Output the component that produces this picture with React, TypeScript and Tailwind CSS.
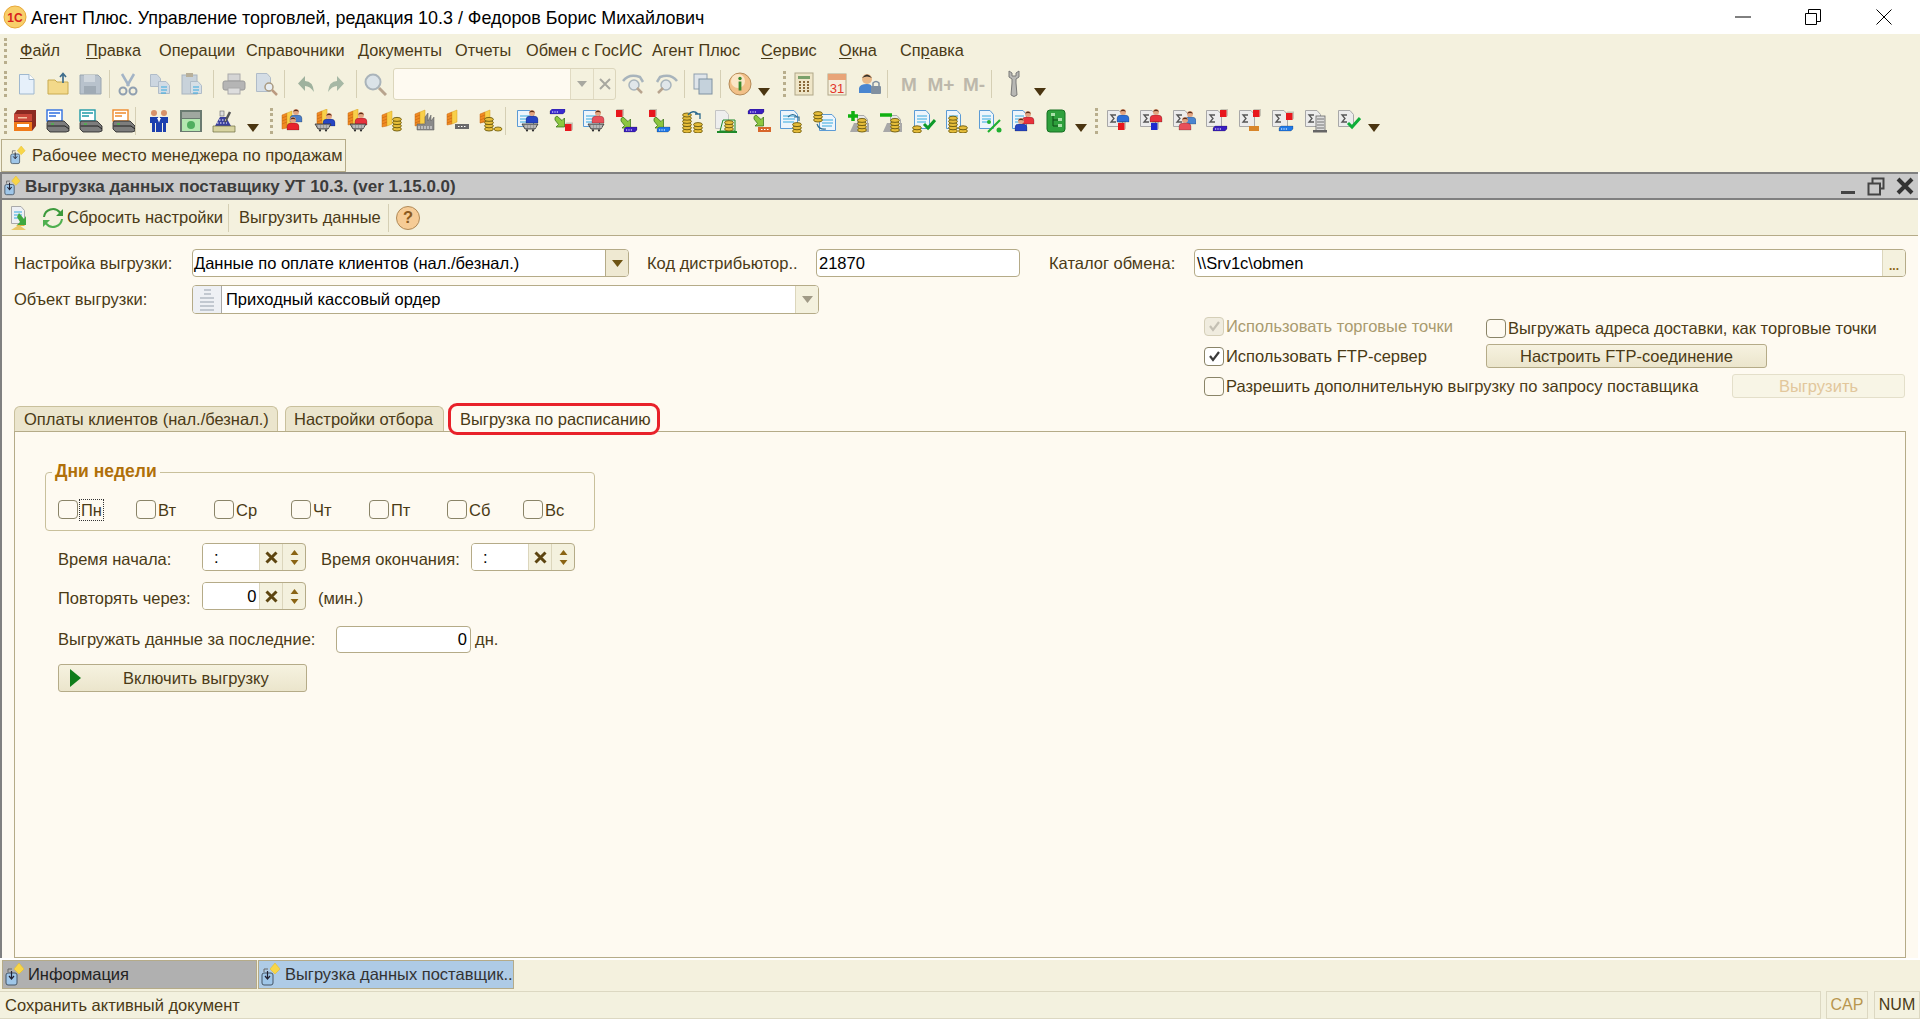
import React from "react";

type XY = { x?: number; y?: number };
const Svg = ({ children, w = 24, h = 24, vb = "0 0 24 24", c = "" }: { children: React.ReactNode; w?: number; h?: number; vb?: string; c?: string }) => (
  <svg width={w} height={h} viewBox={vb} className={c + " shrink-0 block"}>{children}</svg>
);
const Pg = ({ x = 0, y = 0, w = 14, h = 18, f = "#eef5fb", s = "#5b9bd5", l = true }: XY & { w?: number; h?: number; f?: string; s?: string; l?: boolean }) => (
  <g transform={`translate(${x} ${y})`}>
    <path d={`M.5 .5H${w - 4}L${w - .5} 4.5V${h - .5}H.5Z`} fill={f} stroke={s} />
    {l && <path d={`M3 6H${w - 3}M3 9H${w - 3}M3 12H${w - 4}`} stroke="#35a9e0" strokeWidth="1.2" />}
  </g>
);
const Coins = ({ x = 0, y = 0, n = 3 }: XY & { n?: number }) => (
  <g>{Array.from({ length: n }).map((_, i) => (
    <ellipse key={i} cx={x} cy={y - i * 3.2} rx="4.4" ry="2" fill="#e6bd3a" stroke="#6b5a10" strokeWidth=".9" />
  ))}</g>
);
const Person = ({ x = 0, y = 0, c = "#2b4fc7" }: XY & { c?: string }) => (
  <g transform={`translate(${x} ${y})`}>
    <path d="M-6 12V8.5Q-6 5 -2 5H2Q6 5 6 8.5V12Z" fill={c} stroke="#00000055" strokeWidth=".6" />
    <circle cx="0" cy="2" r="3" fill="#e3a582" />
    <path d="M-3 1.6Q0 -2.6 3 1.6Q0 .2 -3 1.6Z" fill="#5a2c18" />
  </g>
);
const Bars = ({ x = 0, y = 0, h = 15 }: XY & { h?: number }) => (
  <g transform={`translate(${x} ${y})`}>
    <path d={`M0 4L5 2V${h}L0 ${h + 1}Z`} fill="#f08a22" stroke="#c96a12" strokeWidth=".5" />
    <path d={`M5 2L10 0V${h - 2}L5 ${h}Z`} fill="#f8cf4a" stroke="#d8a01e" strokeWidth=".5" />
    <path d={`M0 7L5 5M0 10L5 8M0 13L5 11`} stroke="#b85c10" strokeWidth=".5" />
  </g>
);
const Cart = ({ x = 0, y = 0 }: XY) => (
  <g transform={`translate(${x} ${y})`}>
    <path d="M0 0H16L13 5H3Z" fill="#9a9a9a" stroke="#333" strokeWidth=".8" />
    <path d="M4 1V4M7 1V4M10 1V4M13 1V4" stroke="#eee" strokeWidth=".7" />
    <circle cx="5" cy="6.4" r="1.1" fill="#333" /><circle cx="11" cy="6.4" r="1.1" fill="#333" />
  </g>
);
const Arr = ({ x = 0, y = 0 }: XY) => (
  <path transform={`translate(${x} ${y})`} d="M0 1.5L2 0L7 4.5L9.5 2V11H1L3.5 8.5L0 4Z" fill="#8cc63f" stroke="#2e6b12" strokeWidth=".7" />
);
const Box = ({ x = 0, y = 0, c = "#3a2ad0", w = 13 }: XY & { c?: string; w?: number }) => (
  <g transform={`translate(${x} ${y})`}>
    <path d={`M0 2L2 0H${w}V3L${w - 2} 5H0Z`} fill={c} stroke="#00000066" strokeWidth=".5" />
    <path d="M2 3H3.2M4.4 3H5.6M6.8 3H8" stroke="#fff" strokeWidth="1.1" />
  </g>
);
const Red = ({ x = 0, y = 0, c = "#e8171d" }: XY & { c?: string }) => (
  <g transform={`translate(${x} ${y})`}>
    <rect width="6.5" height="7" fill={c} /><path d="M0 0L1.5 -1.4H8V5.5L6.5 7V0Z" fill="#00000030" />
  </g>
);
const Sig = ({ children }: { children?: React.ReactNode }) => (
  <Svg>
    <Pg x={1} y={1} w={16} h={17} f="#ececec" s="#a8a8a8" l={false} />
    <path d="M10 6H5L8 9.5L5 13H10" fill="none" stroke="#555" strokeWidth="1.3" />
    {children}
  </Svg>
);
const Printer = ({ c }: { c: string }) => (
  <Svg>
    <rect x="1" y="1" width="15" height="11" fill="#fff" stroke={c} strokeWidth="1.4" />
    <path d="M3 4H14M3 7H10" stroke={c} strokeWidth="1.4" />
    <path d="M2 12H18L23 17V22L20 23H4L1 20V14Z" fill="#7d7d7d" stroke="#222" strokeWidth=".8" />
    <path d="M1.500 17H19L23 20" stroke="#222" fill="none" />
    <path d="M5 15H8" stroke="#3ec43e" strokeWidth="1.200" />
  </Svg>
);
const Grip = () => <div className="h-[26px] w-[3px] shrink-0 border-l-[3px] border-dotted border-[#b8ae8c]" />;
const Sep = ({ c }: { c: string }) => <div className={c + " h-[28px] w-px shrink-0 bg-[#d5cfb4]"} />;
const Drop = ({ c = "" }: { c?: string }) => (
  <Svg w={12} h={8} vb="0 0 12 8" c={c + " mt-[15px]"}><path d="M0 0H12L6 8Z" fill="#4a3510" /></Svg>
);
const Slot = ({ c = "w-[32px]", children }: { c?: string; children: React.ReactNode }) => (
  <div className={c + " flex shrink-0 items-center justify-center"}>{children}</div>
);
const DocStar = ({ s = 16 }: { s?: number }) => (
  <Svg w={s} h={s * 1.15} vb="0 0 20 23">
    <path d="M7 6H3V9" fill="none" stroke="#666" strokeWidth="1" />
    <rect x="1" y="10" width="11" height="12" rx="2" fill="#9fc6e8" stroke="#456" strokeWidth="1" />
    <path d="M6.500 8V15M4 13L6.500 16L9 13" fill="none" stroke="#223" strokeWidth="1.200" />
    <path d="M14 0L19 6L14 11L9 6Z" fill="#f8d648" stroke="#e4b820" strokeWidth=".5" />
  </Svg>
);

const Row1 = () => (
  <div className="flex h-[34px] items-center pl-[4px]">
    <Grip />
    <div className="w-[3px] shrink-0" />
    <Slot><Svg><path d="M5.500 2.500H15L20 7.500V22H5.500Z" fill="#e6f0fa" stroke="#9fb8cf" /><path d="M15 2.500V7.500H20" fill="#fff" stroke="#9fb8cf" /></Svg></Slot>
    <Slot><Svg><path d="M2 8H9L11 10H22V22H2Z" fill="#f3d98a" stroke="#c8aa50" /><path d="M17 2V11M14 5L17 1.500L20 5" fill="none" stroke="#3f6d8c" strokeWidth="1.700" /></Svg></Slot>
    <Slot><Svg><path d="M2 3H20L23 6V22H2Z" fill="#b8c2cc" stroke="#9aa6b0" /><rect x="6" y="3" width="11" height="7" fill="#d0d7dd" /><rect x="6" y="14" width="12" height="8" fill="#a0abb5" /></Svg></Slot>
    <Sep c="ml-[3px] mr-[2px]" />
    <Slot><Svg><path d="M6 2L13 14M18 2L11 14" stroke="#a3b4c6" strokeWidth="2.500" /><circle cx="7" cy="19" r="3.500" fill="none" stroke="#8f9fb0" strokeWidth="2" /><circle cx="17" cy="19" r="3.500" fill="none" stroke="#8f9fb0" strokeWidth="2" /></Svg></Slot>
    <Slot><Svg><Pg x={2} y={2} w={11} h={13} f="#ccd6e0" s="#b0bcc8" l={false} /><Pg x={10} y={9} w={12} h={13} f="#d2dce5" s="#b0bcc8" /></Svg></Slot>
    <Slot><Svg><rect x="2" y="3" width="15" height="19" fill="#c8d2da" stroke="#a8b4be" /><rect x="6" y="1" width="7" height="4" fill="#b8b09a" /><Pg x={10} y={9} w={12} h={13} f="#d6dfe6" s="#b0bcc8" /></Svg></Slot>
    <Sep c="ml-[5px] mr-[4px]" />
    <Slot><Svg><rect x="6" y="2" width="12" height="7" fill="#d5d5d5" stroke="#aaa" /><rect x="1" y="9" width="22" height="9" rx="2" fill="#b5b5b5" stroke="#999" /><rect x="6" y="16" width="12" height="6" fill="#ddd" stroke="#aaa" /></Svg></Slot>
    <Slot><Svg><Pg x={2} y={1} w={15} h={19} f="#d4dde5" s="#b0bcc8" l={false} /><circle cx="15" cy="15" r="4" fill="#e8eef2" stroke="#aa9a80" strokeWidth="1.500" /><path d="M18 18L23 23" stroke="#bb9a80" strokeWidth="2.500" /></Svg></Slot>
    <Sep c="ml-[2px] mr-[6px]" />
    <Slot c="w-[30px]"><Svg w={18} h={20} vb="0 0 18 20"><path d="M8 2V7Q16 7 17 18Q13 12 8 12V17L1 9.500Z" fill="#9fb29e" /></Svg></Slot>
    <Slot c="w-[30px]"><Svg w={18} h={20} vb="0 0 18 20"><path d="M10 2V7Q2 7 1 18Q5 12 10 12V17L17 9.500Z" fill="#a6b8a5" /></Svg></Slot>
    <Sep c="ml-[5px] mr-[2px]" />
    <Slot><Svg><circle cx="10" cy="10" r="7.500" fill="#dbe3e8" stroke="#aab4ba" strokeWidth="2" /><path d="M16 16L23 23" stroke="#b8a48e" strokeWidth="3" /></Svg></Slot>
    <div className="ml-[2px] flex h-[32px] w-[223px] shrink-0 items-stretch rounded-[3px] border border-[#dcd6bc] bg-[#f4f1de]">
      <div className="w-[176px] rounded-l-[3px] bg-[#fefaf1]" />
      <div className="flex w-[23px] items-center justify-center border-l border-[#e0dac2]"><Svg w={10} h={6} vb="0 0 10 6"><path d="M0 0H10L5 6Z" fill="#a8a8a0" /></Svg></div>
      <div className="flex w-[22px] items-center justify-center border-l border-[#e0dac2]"><Svg w={12} h={12} vb="0 0 12 12"><path d="M1 1L11 11M11 1L1 11" stroke="#a8a8a0" strokeWidth="2" /></Svg></div>
    </div>
    <Slot c="w-[34px] ml-[0px]"><Svg><path d="M2 9Q8 1 19 5L22 10" fill="none" stroke="#a8b4bc" strokeWidth="2.500" /><circle cx="13" cy="13" r="5" fill="#e0e6ea" stroke="#a8b4bc" strokeWidth="1.500" /><path d="M16 16L21 21" stroke="#b8a48e" strokeWidth="2.500" /></Svg></Slot>
    <Slot c="w-[33px]"><Svg><path d="M22 9Q16 1 5 5L2 10" fill="none" stroke="#a8b4bc" strokeWidth="2.500" /><circle cx="11" cy="13" r="5" fill="#e0e6ea" stroke="#a8b4bc" strokeWidth="1.500" /><path d="M8 16L3 21" stroke="#b8a48e" strokeWidth="2.500" /></Svg></Slot>
    <Sep c="ml-[1px] mr-[4px]" />
    <Slot c="w-[28px]"><Svg><rect x="3" y="2" width="13" height="15" fill="#dfe5ea" stroke="#8fa0ae" /><rect x="8" y="7" width="13" height="15" fill="#c5d2dc" stroke="#7f92a2" /></Svg></Slot>
    <Sep c="ml-[3px] mr-[4px]" />
    <Slot c="w-[30px]"><Svg><circle cx="12" cy="12" r="11" fill="#f2c088" stroke="#b48a58" /><circle cx="10" cy="9" r="7" fill="#fbe6c6" /><circle cx="12" cy="6.500" r="1.700" fill="#3a8a2c" /><rect x="10.600" y="9.500" width="2.800" height="9" fill="#3a8a2c" /></Svg></Slot>
    <Drop c="ml-[3px]" />
    <div className="ml-[13px]"><Grip /></div>
    <Slot c="w-[32px] ml-[2px]"><Svg><rect x="3" y="1" width="18" height="22" fill="#efe6c8" stroke="#b0a888" /><rect x="6" y="4" width="12" height="3" fill="#7aa06a" /><path d="M7 10H9M11 10H13M15 10H17M7 13H9M11 13H13M15 13H17M7 16H9M11 16H13M15 16H17M7 19H9M11 19H13M15 19H17" stroke="#8a6a3a" strokeWidth="2" /></Svg></Slot>
    <Slot c="w-[33px]"><Svg><rect x="3" y="2" width="18" height="21" fill="#f6efdc" stroke="#b0a888" /><rect x="3" y="2" width="18" height="6" fill="#e8a478" /><text x="12" y="21" fontSize="13" fill="#e2352a" textAnchor="middle" fontFamily="Liberation Sans">31</text></Svg></Slot>
    <Slot c="w-[33px]"><Svg><circle cx="9" cy="7" r="5" fill="#e8b888" /><path d="M4 6Q9 -1 14 6Q9 3 4 6Z" fill="#33302a" /><path d="M1 21V16Q2 12 9 12Q14 12 14 16V21Z" fill="#4a86d0" /><rect x="13" y="14" width="10" height="8" rx="1" fill="#8090a0" /><path d="M15 14V11Q18 8 21 11V14" fill="none" stroke="#8090a0" strokeWidth="1.500" /></Svg></Slot>
    <Sep c="ml-[1px] mr-[6px]" />
    <div className="flex w-[100px] shrink-0 items-center font-bold text-[19px] leading-none text-[#bdb8ab]">
      <span className="w-[30px] text-center">M</span><span className="w-[34px] text-center">M+</span><span className="w-[32px] text-center">M-</span>
    </div>
    <Sep c="ml-[-3px] mr-[14px]" />
    <Svg w={16} h={28} vb="0 0 16 28"><path d="M3 1V7L6 9V13L5 25Q8 28 11 25L10 13V9L13 7V1L10 3V6H6V3Z" fill="#b8b8b4" stroke="#7a7a78" /></Svg>
    <Drop c="ml-[12px]" />
  </div>
);

const Sp = ({ children }: { children: React.ReactNode }) => <Slot c="w-[33px]">{children}</Slot>;
const Row2 = () => (
  <div className="mt-[2px] flex h-[35px] items-center pl-[4px]">
    <Grip />
    <div className="w-[1px] shrink-0" />
    <Sp><Svg><path d="M4 1H23V17L19 22H1V5Z" fill="#8b2a22" /><rect x="1" y="5" width="18" height="7" fill="#c9483a" /><rect x="1" y="13" width="18" height="9" fill="#f07a1a" /><rect x="5" y="8" width="9" height="1.500" fill="#f4c0a0" /><rect x="4" y="15" width="12" height="3" fill="#fff" /></Svg></Sp>
    <Sp><Printer c="#2f6fe0" /></Sp>
    <Sp><Printer c="#1f9aa8" /></Sp>
    <Sp><Printer c="#ee8a2c" /></Sp>
    <Sep c="ml-[-5px] mr-[7px]" />
    <Slot c="w-[31px]"><Svg><circle cx="7" cy="4" r="3" fill="#d8926a" /><circle cx="17" cy="4" r="3" fill="#d8926a" /><path d="M3 8H11L12 14V23H9V14H8V23H5V14L3 14Z" fill="#1c3fae" /><path d="M13 8H21L21 14H19V23H16V14H15V23H12V14Z" fill="#1c3fae" /><path d="M10 9L12 13L14 9Z" fill="#fff" /></Svg></Slot>
    <Sp><Svg><rect x="1" y="1" width="22" height="22" fill="#6a7a70" /><rect x="3" y="3" width="18" height="6" fill="#a0a8a0" /><rect x="3" y="10" width="18" height="12" fill="#b4e8b0" /><circle cx="12" cy="16" r="4" fill="#4fae5f" /></Svg></Sp>
    <Sp><Svg><path d="M3 17L8 8H14L19 17Z" fill="#3a3f9e" /><path d="M1 17H23V23H1Z" fill="#d8d4a0" stroke="#6a6a40" strokeWidth=".7" /><path d="M18 3L13 13" stroke="#555" strokeWidth="2.500" /><rect x="8" y="2" width="4" height="5" fill="#ddd" stroke="#666" strokeWidth=".6" /><path d="M5 14H15M7 11H14" stroke="#fff" strokeDasharray="1.500 1.500" /></Svg></Sp>
    <Drop c="ml-[7px]" />
    <div className="ml-[11px]"><Grip /></div>
    <div className="w-[3px] shrink-0" />
    <Sp><Svg><Bars x={1} y={2} h={17} /><Person x={15} y={1} c="#4a7dc8" /><Person x={12} y={9} c="#e8232c" /></Svg></Sp>
    <Sp><Svg><Bars x={3} y={0} /><Person x={15} y={5} c="#2645c4" /><Cart x={1} y={15} /></Svg></Sp>
    <Sp><Svg><Bars x={1} y={0} /><Person x={14} y={4} c="#e8323c" /><Cart x={3} y={15} /></Svg></Sp>
    <Sp><Svg><Bars x={2} y={2} /><Coins x={17} y={20} n={4} /></Svg></Sp>
    <Sp><Svg><Bars x={2} y={1} /><path d="M12 8L15 4V12L18 6V12L21 8V21H4V15H12Z" fill="#8a8a8a" stroke="#555" strokeWidth=".5" /><path d="M6 17V20M9 17V20M12 17V20M15 17V20M18 17V20" stroke="#eee" /></Svg></Sp>
    <Sp><Svg><Bars x={1} y={1} h={14} /><rect x="9" y="15" width="14" height="5" fill="#6a6a6a" /><path d="M12 17.500H13.500M15 17.500H16.500M18 17.500H19.500" stroke="#fff" /></Svg></Sp>
    <Sp><Svg><Bars x={1} y={1} h={12} /><Coins x={10} y={20} n={4} /><ellipse cx="19" cy="20" rx="4" ry="2" fill="#e6bd3a" stroke="#6b5a10" strokeWidth=".8" /></Svg></Sp>
    <Sep c="ml-[-2px] mr-[5px]" />
    <Sp><Svg><Pg x={1} y={1} w={17} h={17} /><Person x={16} y={2} c="#2645c4" /><Cart x={6} y={15} /></Svg></Sp>
    <Sp><Svg><Box x={1} y={0} w={15} /><Arr x={6} y={7} /><Red x={16} y={15} /></Svg></Sp>
    <Sp><Svg><Pg x={1} y={1} w={17} h={17} /><Person x={16} y={2} c="#e8505a" /><Cart x={6} y={15} /></Svg></Sp>
    <Sp><Svg><Red x={1} y={1} /><Arr x={6} y={8} /><Box x={9} y={18} c="#3a1ec0" /></Svg></Sp>
    <Sp><Svg><Red x={1} y={1} /><Arr x={6} y={8} /><Box x={9} y={18} c="#1e78e8" /></Svg></Sp>
    <Sp><Svg><Coins x={6} y={22} n={6} /><Coins x={17} y={22} n={3} /><path d="M7 6Q12 0 17 5M14 5H19V10" fill="none" stroke="#2c6a8e" strokeWidth="1.300" /></Svg></Sp>
    <Sp><Svg><Pg x={1} y={1} w={14} h={19} f="#eeeeee" s="#c4c4c4" l={false} /><path d="M6 22L9 11H21V22Z" fill="#e8f4e0" stroke="#1e8a2a" /><path d="M3 23H23" stroke="#1e8a2a" strokeWidth="2" /><Coins x={15} y={20} n={3} /></Svg></Sp>
    <Sp><Svg><Box x={1} y={0} c="#3a1ec0" w={16} /><Arr x={7} y={6} /><rect x="11" y="18" width="13" height="5" fill="#d8662a" /><path d="M14 20.500H15.500M17 20.500H18.500M20 20.500H21.500" stroke="#fff" /></Svg></Sp>
    <Sp><Svg><Pg x={0} y={1} w={18} h={19} /><path d="M8 8Q13 3 17 8M14 8H19V12" fill="none" stroke="#2c6a8e" strokeWidth="1.200" /><Coins x={17} y={22} n={3} /></Svg></Sp>
    <Sp><Svg><Pg x={6} y={5} w={17} h={17} /><Coins x={5} y={11} n={3} /><path d="M4 15Q6 21 13 20" fill="none" stroke="#2c6a8e" strokeWidth="1.200" /></Svg></Sp>
    <Sp><Svg><path d="M8 14H23V23H4Z" fill="#a8a8a8" /><Pg x={11} y={6} w={11} h={14} f="#e8e8e8" s="#aaa" l={false} /><path d="M7 2V12M2 7H12" stroke="#10b010" strokeWidth="3.500" /><Coins x={16} y={21} n={4} /></Svg></Sp>
    <Sp><Svg><path d="M8 14H23V23H4Z" fill="#a8a8a8" /><Pg x={11} y={6} w={11} h={14} f="#e8e8e8" s="#aaa" l={false} /><path d="M1 6H13" stroke="#10b010" strokeWidth="3.500" /><Coins x={16} y={21} n={4} /></Svg></Sp>
    <Sp><Svg><Pg x={2} y={1} w={16} h={19} /><Coins x={5} y={22} n={2} /><path d="M12 15L16 19L23 11" fill="none" stroke="#0e9a2a" strokeWidth="3" /></Svg></Sp>
    <Sp><Svg><Pg x={1} y={1} w={15} h={19} /><Coins x={8} y={22} n={5} /><Coins x={18} y={22} n={2} /></Svg></Sp>
    <Sp><Svg><Pg x={1} y={1} w={15} h={19} /><path d="M10 23L22 11" stroke="#20b030" strokeWidth="2.200" /><circle cx="11" cy="13" r="2" fill="#20b030" /><circle cx="21" cy="21" r="2.500" fill="#20b030" /></Svg></Sp>
    <Sp><Svg><Pg x={1} y={1} w={15} h={19} /><Person x={17} y={3} c="#e8323c" /><Person x={10} y={10} c="#2645c4" /></Svg></Sp>
    <Sp><Svg><rect x="3" y="1" width="18" height="22" rx="3" fill="#2ea03c" stroke="#177022" /><path d="M9 6V17H14M9 11H14" fill="none" stroke="#0d4a14" /><rect x="7" y="4" width="4" height="3" fill="#a8e0a8" /><rect x="14" y="9" width="4" height="3" fill="#a8e0a8" /><rect x="14" y="15" width="4" height="3" fill="#a8e0a8" /></Svg></Sp>
    <Drop c="ml-[3px]" />
    <div className="ml-[8px]"><Grip /></div>
    <div className="w-[3px] shrink-0" />
    <Sp><Sig><Person x={17} y={1} c="#2d6fd8" /><Red x={12} y={14} /></Sig></Sp>
    <Sp><Sig><Person x={17} y={1} c="#e8323c" /><Red x={12} y={14} c="#1e2ad0" /></Sig></Sp>
    <Sp><Sig><Person x={18} y={3} c="#4a86d0" /><Person x={13} y={9} c="#e8505a" /></Sig></Sp>
    <Sp><Sig><Red x={15} y={1} /><Box x={8} y={17} c="#3a1ec0" w={14} /></Sig></Sp>
    <Sp><Sig><Red x={15} y={1} /><rect x="11" y="17" width="10" height="5" fill="#d8862a" /></Sig></Sp>
    <Sp><Sig><Red x={15} y={4} /><Box x={8} y={17} c="#1e78e8" w={14} /></Sig></Sp>
    <Sp><Sig><rect x="12" y="7" width="9" height="15" fill="#ddd" stroke="#666" strokeWidth=".8" /><path d="M13 10H20M13 13H20M13 16H20M13 19H20" stroke="#777" /><rect x="9" y="21" width="14" height="2.500" fill="#666" /></Sig></Sp>
    <Sp><Sig><path d="M11 14L15 18L23 9" fill="none" stroke="#0fae3a" strokeWidth="3" /></Sig></Sp>
    <Drop c="ml-[3px]" />
  </div>
);

const inputCls = "h-full rounded-[4px] border border-[#b5ab88] bg-white";
const Chk = ({ on, dim }: { on?: boolean; dim?: boolean }) => (
  <div className={(dim ? "border-[#d5cfb8] bg-[#f0ecdf]" : on ? "border-[#8a8468] bg-white" : "border-[#8a8468] bg-[#fefaf1]") + " flex h-[19px] w-[20px] shrink-0 items-center justify-center rounded-[4px] border"}>
    {on && <Svg w={13} h={12} vb="0 0 13 12"><path d="M2 6L5 10L11 2" fill="none" stroke={dim ? "#c4c0b4" : "#3a3a3a"} strokeWidth="2.200" /></Svg>}
  </div>
);
const Day = ({ t, c, focus }: { t: string; c: string; focus?: boolean }) => (
  <div className={c + " flex shrink-0 items-center gap-[1px]"}>
    <Chk />
    <span className={(focus ? "border border-dotted border-[#333] " : "") + "px-px leading-[20px]"}>{t}</span>
  </div>
);
const SpinField = ({ v, right, c }: { v: string; right?: boolean; c: string }) => (
  <div className={c + " flex h-full w-[104px] shrink-0 items-stretch overflow-hidden rounded-[4px] border border-[#b5ab88] bg-[#f4f1de]"}>
    <div className={(right ? "justify-end pr-[3px]" : "pl-[11px]") + " flex w-[57px] items-center bg-white text-black"}>{v}</div>
    <div className="flex w-[23px] items-center justify-center border-l border-[#dcd6bc]"><Svg w={13} h={13} vb="0 0 13 13"><path d="M1.500 1.500L11.500 11.500M11.500 1.500L1.500 11.500" stroke="#5d4510" strokeWidth="3" /></Svg></div>
    <div className="flex w-[23px] flex-col items-center justify-center gap-[5px] border-l border-[#dcd6bc]">
      <Svg w={9} h={5} vb="0 0 11 7"><path d="M5.500 0L11 7H0Z" fill="#8a6414" /></Svg>
      <Svg w={9} h={5} vb="0 0 11 7"><path d="M0 0H11L5.500 7Z" fill="#8a6414" /></Svg>
    </div>
  </div>
);

export default function App() {
  return (
    <div className="flex h-[1020px] w-[1920px] flex-col overflow-hidden bg-white font-['Liberation_Sans',sans-serif] text-[16.5px] text-[#4a3a16]">
      {/* window title */}
      <div className="flex h-[34px] shrink-0 items-center bg-white text-black">
        <Svg w={24} h={24} c="ml-[3px]">
          <circle cx="12" cy="12" r="11" fill="#f8cf6a" stroke="#e8a83a" />
          <text x="12" y="16.500" fontSize="12" fontWeight="700" fill="#d8211c" textAnchor="middle" fontFamily="Liberation Sans">1C</text>
        </Svg>
        <span className="ml-[4px] pt-[2px] text-[17.9px] whitespace-nowrap">Агент Плюс. Управление торговлей, редакция 10.3 / Федоров Борис Михайлович</span>
        <div className="ml-auto flex items-center">
          <Svg w={16} h={16} vb="0 0 16 16" c="mr-[54px]"><path d="M0 8H16" stroke="#000" /></Svg>
          <Svg w={16} h={16} vb="0 0 16 16" c="mr-[55px]"><path d="M.5 4.500H11.500V15.500H.5ZM3.500 4.500V.5H15.500V12.500H11.500" fill="none" stroke="#000" /></Svg>
          <Svg w={16} h={16} vb="0 0 16 16" c="mr-[28px]"><path d="M.5 .5L15.500 15.500M15.500 .5L.5 15.500" stroke="#000" /></Svg>
        </div>
      </div>

      {/* menus and toolbars */}
      <div className="h-[138px] shrink-0 bg-[#f4f1de]">
        <div className="flex h-[33px] items-center pl-[4px] text-[16.3px]">
          <Grip />
          <div className="w-[13px] shrink-0" />
          <span className="w-[66px] shrink-0"><u className="underline-offset-2">Ф</u>айл</span>
          <span className="w-[73px] shrink-0"><u className="underline-offset-2">П</u>равка</span>
          <span className="w-[87px] shrink-0">Операции</span>
          <span className="w-[112px] shrink-0">Справочники</span>
          <span className="w-[97px] shrink-0">Документы</span>
          <span className="w-[71px] shrink-0">Отчеты</span>
          <span className="w-[126px] shrink-0">Обмен с ГосИС</span>
          <span className="w-[109px] shrink-0">Агент Плюс</span>
          <span className="w-[78px] shrink-0"><u className="underline-offset-2">С</u>ервис</span>
          <span className="w-[61px] shrink-0"><u className="underline-offset-2">О</u>кна</span>
          <span className="shrink-0">Сп<u className="underline-offset-2">р</u>авка</span>
        </div>
        <Row1 />
        <Row2 />
        <div className="ml-[1px] mt-[1px] flex h-[33px] w-[345px] items-center gap-[6px] border border-[#b5ab88] pl-[8px]">
          <DocStar />
          <span className="whitespace-nowrap">Рабочее место менеджера по продажам</span>
        </div>
      </div>

      {/* document window */}
      <div className="flex h-[786px] w-[1918px] shrink-0 flex-col border-l-2 border-t-2 border-[#808080] bg-[#fefaf1]">
        <div className="flex h-[26px] shrink-0 items-center border-b-2 border-[#808080] bg-[#c9c9c9]">
          <div className="ml-[2px]"><DocStar s={17} /></div>
          <span className="ml-[4px] pt-[1px] text-[17px] font-bold text-[#3c3c3c]">Выгрузка данных поставщику УТ 10.3. (ver 1.15.0.0)</span>
          <div className="ml-auto flex items-center pr-[4px]">
            <div className="mr-[12px] mt-[13px] h-[3px] w-[14px] bg-[#444]" />
            <Svg w={18} h={19} vb="0 0 18 19" c="mr-[11px]"><path d="M5.500 6V1.500H16.500V11.500H13M1.500 6.500H13V17.500H1.500Z" fill="none" stroke="#444" strokeWidth="2" /></Svg>
            <Svg w={18} h={18} vb="0 0 18 18"><path d="M2 2L16 16M16 2L2 16" stroke="#333" strokeWidth="4" /></Svg>
          </div>
        </div>
        <div className="flex h-[36px] shrink-0 items-center border-b border-[#b5ab88] bg-[#f4f1de]">
          <Svg w={20} h={26} vb="0 0 20 26" c="ml-[8px]"><Pg x={1} y={1} w={14} h={18} f="#eef0f4" s="#aaa" /><path d="M6 21L11 17L15 21Z" fill="#e0b040" /><path d="M1 25H16L9 20Z" fill="#e8c868" /><path d="M9 8L14 14L16 11V20H7L10 17L7 12Z" fill="#3fa83f" /></Svg>
          <Svg w={24} h={24} c="ml-[11px]"><path d="M4 11A8 8 0 0 1 18 7L15 10H22V3L19.500 5.500A10 10 0 0 0 2 11Z" fill="#3c9a3c" /><path d="M20 13A8 8 0 0 1 6 17L9 14H2V21L4.500 18.500A10 10 0 0 0 22 13Z" fill="#4fb04f" /></Svg>
          <span className="ml-[2px] w-[161px] whitespace-nowrap">Сбросить настройки</span>
          <div className="h-[28px] w-px bg-[#d5cfb4]" />
          <span className="ml-[10px] w-[149px] whitespace-nowrap">Выгрузить данные</span>
          <div className="h-[28px] w-px bg-[#d5cfb4]" />
          <div className="ml-[7px] flex h-[24px] w-[24px] items-center justify-center rounded-full border border-[#b08a58] bg-[#f6cc96] font-bold text-[#8a5a20]">?</div>
        </div>

        {/* form */}
        <div className="flex min-h-0 flex-1 flex-col pr-[12px] pl-[12px]">
          <div className="mt-[13px] flex h-[28px] shrink-0 items-center">
            <span className="w-[178px] shrink-0 whitespace-nowrap">Настройка выгрузки:</span>
            <div className={inputCls + " flex w-[437px] shrink-0 items-stretch overflow-hidden"}>
              <span className="flex flex-1 items-center pl-[1px] whitespace-nowrap text-black">Данные по оплате клиентов (нал./безнал.)</span>
              <div className="flex w-[23px] items-center justify-center border-l border-[#b5ab88] bg-[#efe9d2]"><Svg w={11} h={7} vb="0 0 11 7"><path d="M0 0H11L5.500 7Z" fill="#6d5312" /></Svg></div>
            </div>
            <span className="ml-[18px] w-[169px] shrink-0 whitespace-nowrap">Код дистрибьютор..</span>
            <div className={inputCls + " flex w-[204px] shrink-0 items-center pl-[2px] text-black"}>21870</div>
            <span className="ml-[29px] w-[145px] shrink-0 whitespace-nowrap">Каталог обмена:</span>
            <div className={inputCls + " flex w-[712px] shrink-0 items-stretch overflow-hidden"}>
              <span className="flex flex-1 items-center pl-[2px] text-black">\\Srv1c\obmen</span>
              <div className="flex w-[23px] items-end justify-center border-l border-[#dcd6bc] bg-[#f4f1de] pb-[7px] text-[#8a6414]"><span className="text-[12px] leading-[6px] font-bold">...</span></div>
            </div>
          </div>
          <div className="mt-[8px] flex h-[29px] shrink-0 items-center">
            <span className="w-[178px] shrink-0 whitespace-nowrap">Объект выгрузки:</span>
            <div className={inputCls + " flex w-[627px] shrink-0 items-stretch overflow-hidden"}>
              <div className="flex w-[29px] items-center justify-center border-r border-[#a8a8a8] bg-[#eef0f4]"><Svg w={18} h={24} vb="0 0 18 24"><path d="M6 2H13M6 6H13M2 10H16M2 14H16M2 18H16M2 22H16" stroke="#c2c8d0" strokeWidth="2" /></Svg></div>
              <span className="flex flex-1 items-center pl-[4px] text-black">Приходный кассовый ордер</span>
              <div className="flex w-[23px] items-center justify-center border-l border-[#dcd6bc] bg-[#f4f1de]"><Svg w={11} h={7} vb="0 0 11 7"><path d="M0 0H11L5.500 7Z" fill="#a09a86" /></Svg></div>
            </div>
          </div>

          <div className="mt-[3px] flex shrink-0 pl-[1190px]">
            <div className="w-[282px] shrink-0">
              <div className="flex h-[18px] items-center gap-[2px] text-[#a99a6f]"><Chk on dim /><span className="whitespace-nowrap">Использовать торговые точки</span></div>
              <div className="mt-[12px] flex h-[18px] items-center gap-[2px]"><Chk on /><span className="whitespace-nowrap">Использовать FTP-сервер</span></div>
              <div className="mt-[12px] flex h-[18px] items-center gap-[2px]"><Chk /><span className="whitespace-nowrap">Разрешить дополнительную выгрузку по запросу поставщика</span></div>
            </div>
            <div className="w-[419px] shrink-0">
              <div className="mt-[2px] flex h-[18px] items-center gap-[2px]"><Chk /><span className="whitespace-nowrap">Выгружать адреса доставки, как торговые точки</span></div>
              <div className="mt-[7px] flex h-[24px] w-[281px] items-center justify-center rounded-[3px] border border-[#b5ab88] bg-gradient-to-b from-[#f6f2e0] to-[#ebe5cc]">Настроить FTP-соединение</div>
              <div className="ml-[246px] mt-[6px] flex h-[24px] w-[173px] items-center justify-center rounded-[3px] border border-[#e4dfca] bg-[#f8f5e6] text-[#e2c79c]">Выгрузить</div>
            </div>
          </div>

          {/* tabs */}
          <div className="mt-[8px] flex h-[25px] shrink-0 items-stretch">
            <div className="flex w-[264px] shrink-0 items-center rounded-t-[6px] border border-b-0 border-[#c9c09c] bg-[#ebe5cd] pl-[9px] whitespace-nowrap">Оплаты клиентов (нал./безнал.)</div>
            <div className="ml-[7px] flex w-[159px] shrink-0 items-center rounded-t-[6px] border border-b-0 border-[#c9c09c] bg-[#ebe5cd] pl-[8px] whitespace-nowrap">Настройки отбора</div>
            <div className="relative ml-[7px] z-10 flex h-[26px] w-[206px] shrink-0 items-center bg-[#fefaf1] pl-[9px] whitespace-nowrap">
              Выгрузка по расписанию
              <div className="absolute inset-x-[-3px] top-[-3px] bottom-[-3px] rounded-[9px] border-[3px] border-[#e8212a]" />
            </div>
          </div>
          <div className="min-h-0 flex-1 border border-[#b5ab88]">
            <div className="relative ml-[30px] mt-[40px] flex h-[59px] w-[550px] items-center rounded-[4px] border border-[#c9c09c] pl-[12px] pt-[16px]">
              <span className="absolute left-[6px] top-[-12px] bg-[#fefaf1] px-[3px] text-[17.5px] leading-[20px] font-bold text-[#b0700a]">Дни недели</span>
              <Day t="Пн" c="w-[78px]" focus />
              <Day t="Вт" c="w-[78px]" />
              <Day t="Ср" c="w-[77px]" />
              <Day t="Чт" c="w-[78px]" />
              <Day t="Пт" c="w-[78px]" />
              <Day t="Сб" c="w-[76px]" />
              <Day t="Вс" c="w-[60px]" />
            </div>
            <div className="ml-[43px] mt-[12px] flex h-[28px] items-center">
              <span className="w-[144px] shrink-0 pt-[5px]">Время начала:</span>
              <SpinField v=":" c="" />
              <span className="ml-[15px] w-[150px] shrink-0 pt-[5px] whitespace-nowrap">Время окончания:</span>
              <SpinField v=":" c="" />
            </div>
            <div className="ml-[43px] mt-[11px] flex h-[28px] items-center">
              <span className="w-[144px] shrink-0 pt-[5px]">Повторять через:</span>
              <SpinField v="0" right c="" />
              <span className="ml-[12px] pt-[5px]">(мин.)</span>
            </div>
            <div className="ml-[43px] mt-[16px] flex h-[27px] items-center">
              <span className="w-[278px] shrink-0 whitespace-nowrap">Выгружать данные за последние:</span>
              <div className={inputCls + " flex w-[135px] shrink-0 items-center justify-end pr-[3px] text-black"}>0</div>
              <span className="ml-[4px]">дн.</span>
            </div>
            <div className="ml-[43px] mt-[11px] flex h-[28px] w-[249px] items-center rounded-[3px] border border-[#b5ab88] bg-gradient-to-b from-[#f6f2e0] to-[#ebe5cc]">
              <Svg w={11} h={18} vb="0 0 11 18" c="ml-[11px]"><path d="M0 0L11 9L0 18Z" fill="#0f7d1a" /></Svg>
              <span className="ml-[42px] whitespace-nowrap">Включить выгрузку</span>
            </div>
          </div>
        </div>
      </div>

      {/* windows panel and status bar */}
      <div className="h-[2px] shrink-0 bg-white" />
      <div className="flex h-[31px] shrink-0 bg-[#f4f1de] pl-[2px]">
        <div className="flex h-[29px] w-[255px] shrink-0 items-center gap-[3px] border border-[#b5ab88] bg-[#b0b0b0] pl-[2px] text-[#222]"><DocStar s={20} /><span>Информация</span></div>
        <div className="ml-[1px] flex h-[29px] w-[256px] shrink-0 items-center gap-[4px] border border-[#b5ab88] bg-[#aecbe6] pl-[2px] text-[#333]"><DocStar s={20} /><span className="whitespace-nowrap">Выгрузка данных поставщик..</span></div>
      </div>
      <div className="flex h-[28px] shrink-0 gap-[5px] bg-[#f3f1df]">
        <div className="flex w-[1821px] shrink-0 items-center border border-l-0 border-[#dcd8c2] pl-[5px]">Сохранить активный документ</div>
        <div className="flex w-[42px] shrink-0 items-center justify-center border border-[#dcd8c2] text-[16px] text-[#b8964e]">CAP</div>
        <div className="ml-[1px] flex w-[46px] shrink-0 items-center justify-center border border-[#dcd8c2] text-[16px]">NUM</div>
      </div>
    </div>
  );
}
